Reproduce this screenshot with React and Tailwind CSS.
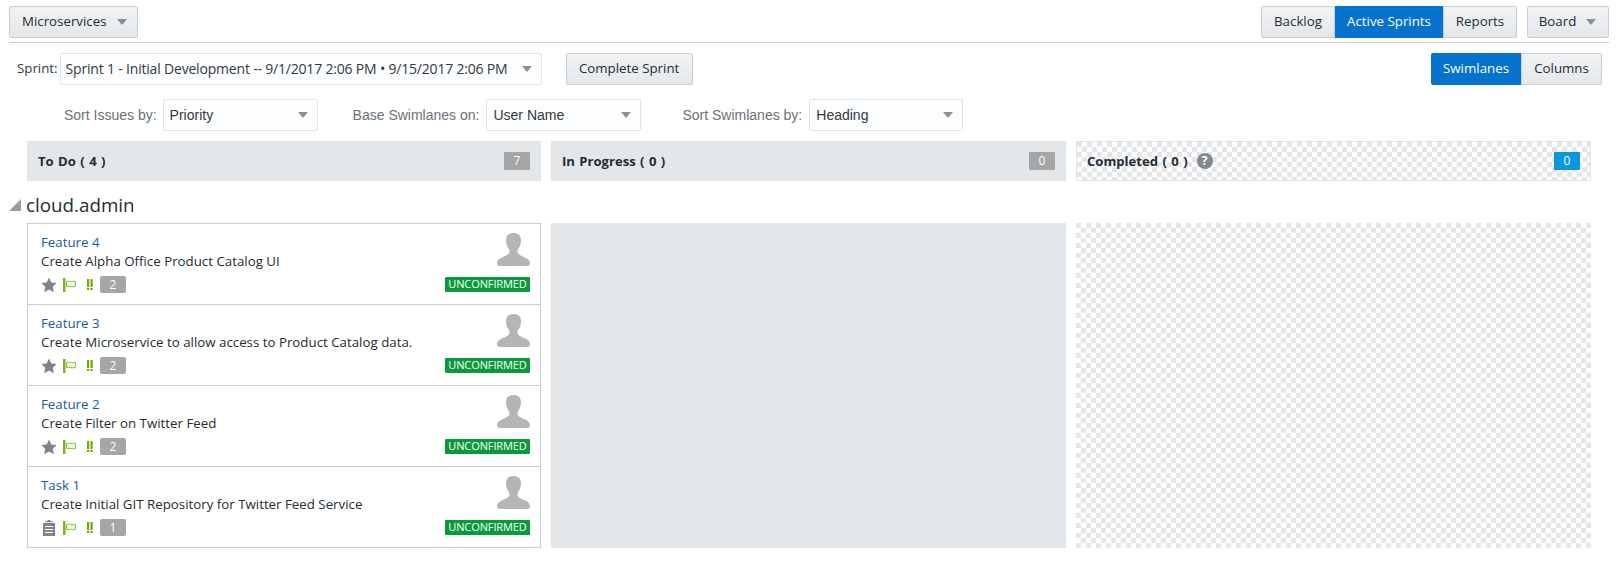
const ui = "font-['Open_Sans','Noto_Sans',sans-serif]";
const arial = "font-['Liberation_Sans',Arial,sans-serif]";
const btn =
  "flex items-center h-8 border border-[#c4ced7] bg-gradient-to-b from-[#f1f3f5] to-[#e4e7ea] text-[13.3px] text-[#252c33]";
const active = "flex items-center h-8 bg-[#0572ce] text-[13.3px] text-white";
const checker =
  "bg-[conic-gradient(#ffffff_25%,#e4e7ea_0_50%,#ffffff_0_75%,#e4e7ea_0)] bg-[length:10px_10px]";

function Caret({ className = "" }) {
  return (
    <svg width="12" height="8" viewBox="0 0 12 8" className={className}>
      <path d="M1 1h10L6 7z" fill="#8b8f94" />
    </svg>
  );
}

function Select({ value, width, font = arial, pad = "pl-[6px]" }) {
  return (
    <div
      className={`flex h-[32px] items-center justify-between rounded-[2px] border border-[#dfe4e7] bg-[#fcfdfe] pr-[8px] ${pad} ${width}`}
    >
      <span className={`${font} whitespace-nowrap text-[14px] leading-[18px] text-[#33393f]`}>{value}</span>
      <Caret />
    </div>
  );
}

function Count({ value, blue }) {
  return (
    <span
      className={`flex h-[18px] w-[26px] items-center justify-center rounded-[1px] text-[12px] font-normal text-white ${
        blue ? "bg-[#0996dc]" : "bg-[#a6a6a6]"
      }`}
    >
      {value}
    </span>
  );
}

function Star() {
  return (
    <svg width="16" height="16" viewBox="0 0 16 16">
      <path d="M8 .5l2.3 5 5.4.6-4 3.7 1.100 5.400L8 12.500l-4.800 2.700 1.100-5.400-4-3.700 5.400-.6z" fill="#7d8388" />
    </svg>
  );
}

function Clipboard() {
  return (
    <svg width="12" height="16" viewBox="0 0 12 16">
      <path d="M4.500 0h3v1.200h2.500v1H2v-1h2.500z" fill="#7d8388" />
      <path
        fillRule="evenodd"
        d="M0 3h12v13H0zM2 6v1h8V6zM2 9v1h8V9zM2 12v1h8v-1z"
        fill="#7d8388"
      />
    </svg>
  );
}

function Flag() {
  return (
    <svg width="13" height="14" viewBox="0 0 13 14">
      <rect x="0" y="0" width="2.500" height="14" fill="#78b41e" />
      <path d="M3.500 3.500c3-1 5 .8 9-.3v5.300c-4 1-6-.8-9 .2z" fill="#eef6df" stroke="#8fc23c" strokeWidth="1" />
    </svg>
  );
}

function Bang() {
  return (
    <svg width="6" height="11" viewBox="0 0 6 11">
      <path d="M0 0h2.200v8H0zM3.500 0h2.200v8H3.500z" fill="#6fa800" />
      <rect x="0" y="9" width="2.200" height="2" fill="#6fa800" />
      <rect x="3.500" y="9" width="2.200" height="2" fill="#6fa800" />
    </svg>
  );
}

function Person() {
  return (
    <svg width="33" height="33" viewBox="0 0 33 33">
      <path
        d="M16.500 0C12 0 9 2.500 9 7c0 3 .8 6 2.500 8.500.8 1.200 1 2 1 3.500 0 2-3 3.500-6.500 5C3 25.300 0 27 0 30c0 2 1 3 3 3h27c2 0 3-1 3-3 0-3-3-4.700-6-6-3.500-1.500-6.500-3-6.500-5 0-1.500.2-2.300 1-3.500C23.200 13 24 10 24 7c0-4.500-3-7-7.500-7z"
        fill="#b5b5b5"
      />
    </svg>
  );
}

function Card({ title, text, points, task, last }) {
  return (
    <div
      className={`flex justify-between pl-[13px] pr-[10px] ${
        last ? "h-[80px]" : "h-[81px] border-b border-[#cbcbcb]"
      }`}
    >
      <div className="flex flex-col">
        <a className="mt-[9px] text-[13.3px] leading-[19px] text-[#145c9e]">{title}</a>
        <p className="text-[13.3px] leading-[19px] text-[#252c33]">{text}</p>
        <div className="mt-[5px] flex h-[17px] items-center">
          <span className="flex w-[16px] justify-center">{task ? <Clipboard /> : <Star />}</span>
          <span className="ml-[6px] flex"><Flag /></span>
          <span className="ml-[11px] flex"><Bang /></span>
          <span className="ml-[7px] flex h-[17px] w-[26px] items-center justify-center rounded-[2px] bg-[#a6a6a6] text-[12px] text-white">
            {points}
          </span>
        </div>
      </div>
      <div className="flex flex-col items-end pt-[9px]">
        <Person />
        <span className="mt-[11px] flex h-[15px] w-[85px] items-center justify-center rounded-[1px] bg-[#0a9a3b] text-[11px] tracking-[-0.1px] text-white">
          UNCONFIRMED
        </span>
      </div>
    </div>
  );
}

const cards = [
  { title: "Feature 4", text: "Create Alpha Office Product Catalog UI", points: 2 },
  { title: "Feature 3", text: "Create Microservice to allow access to Product Catalog data.", points: 2 },
  { title: "Feature 2", text: "Create Filter on Twitter Feed", points: 2 },
  { title: "Task 1", text: "Create Initial GIT Repository for Twitter Feed Service", points: 1, task: true },
];

export default function App() {
  return (
    <div className={`${ui} h-[565px] w-[1616px] overflow-hidden bg-white pl-[9px] pr-[7px] pt-[6px]`}>
      {/* top bar */}
      <div className="flex justify-between border-b border-[#c9cdd0] pb-[4px]">
        <button className={`${btn} w-[129px] rounded-[2px] pl-[12px]`}>
          Microservices
          <Caret className="ml-[9px]" />
        </button>
        <div className="flex">
          <button className={`${btn} w-[74px] justify-center rounded-l-[2px]`}>Backlog</button>
          <button className={`${active} w-[108px] justify-center`}>Active Sprints</button>
          <button className={`${btn} w-[74px] justify-center rounded-r-[2px]`}>Reports</button>
          <button className={`${btn} ml-[10px] w-[82px] justify-center rounded-[2px]`}>
            Board
            <Caret className="ml-[9px]" />
          </button>
        </div>
      </div>

      {/* sprint row */}
      <div className="mt-[10px] flex items-center justify-between pr-[7px]">
        <div className="flex items-center">
          <span className="ml-[8px] mr-[2px] text-[13.3px] text-[#33393f]">Sprint:</span>
          <Select
            value="Sprint 1 - Initial Development -- 9/1/2017 2:06 PM • 9/15/2017 2:06 PM"
            width="w-[482px]"
            font={`${ui} tracking-[-0.19px]`}
            pad="pl-[5px]"
          />
          <button className={`${btn} ml-[24px] w-[127px] justify-center rounded-[2px]`}>Complete Sprint</button>
        </div>
        <div className="flex">
          <button className={`${active} w-[90px] justify-center rounded-l-[2px]`}>Swimlanes</button>
          <button className={`${btn} w-[81px] justify-center rounded-r-[2px]`}>Columns</button>
        </div>
      </div>

      {/* sort row */}
      <div className={`${arial} mt-[14px] flex items-center pl-[55px] text-[14px] text-[#6a7177]`}>
        <span className="mr-[6px]">Sort Issues by:</span>
        <Select value="Priority" width="w-[155px]" />
        <span className="ml-[35px] mr-[7px]">Base Swimlanes on:</span>
        <Select value="User Name" width="w-[155px]" />
        <span className="ml-[41px] mr-[7px]">Sort Swimlanes by:</span>
        <Select value="Heading" width="w-[154px]" />
      </div>

      {/* column headers */}
      <div className="mt-[10px] ml-[18px] flex gap-[10px] text-[13.1px] font-bold text-[#252c33] [word-spacing:1px]">
        <div className="flex h-[40px] w-[514px] items-center justify-between border border-[#dfe4e7] bg-[#e4e7ea] pl-[10px] pr-[10px]">
          <span className="pt-[1px]">To Do ( 4 )</span>
          <Count value="7" />
        </div>
        <div className="flex h-[40px] w-[515px] items-center justify-between border border-[#dfe4e7] bg-[#e4e7ea] pl-[10px] pr-[10px]">
          <span className="pt-[1px]">In Progress ( 0 )</span>
          <Count value="0" />
        </div>
        <div className={`flex h-[40px] w-[515px] items-center justify-between border border-[#dfe4e7] pl-[10px] pr-[10px] ${checker}`}>
          <span className="flex items-center">
            <span className="pt-[1px]">Completed ( 0 )</span>
            <span className="ml-[9px] mt-[1px] flex h-[16px] w-[16px] items-center justify-center rounded-full bg-[#85898d] text-[12px] text-white">
              ?
            </span>
          </span>
          <Count value="0" blue />
        </div>
      </div>

      {/* swimlane */}
      <div className="mt-[12px] flex h-[24px] items-center">
        <svg width="12" height="12" viewBox="0 0 12 12">
          <path d="M12 0v12H0z" fill="#9a9ea2" />
        </svg>
        <span className="ml-[5px] text-[18.8px] text-[#252c33]">cloud.admin</span>
      </div>

      <div className="mt-[6px] ml-[18px] flex gap-[10px]">
        <div className="w-[514px] border border-[#cbcbcb]">
          {cards.map((c, i) => (
            <Card key={c.title} {...c} last={i === cards.length - 1} />
          ))}
        </div>
        <div className="w-[515px] bg-[#e4e7ea]" />
        <div className={`w-[515px] ${checker}`} />
      </div>
    </div>
  );
}
